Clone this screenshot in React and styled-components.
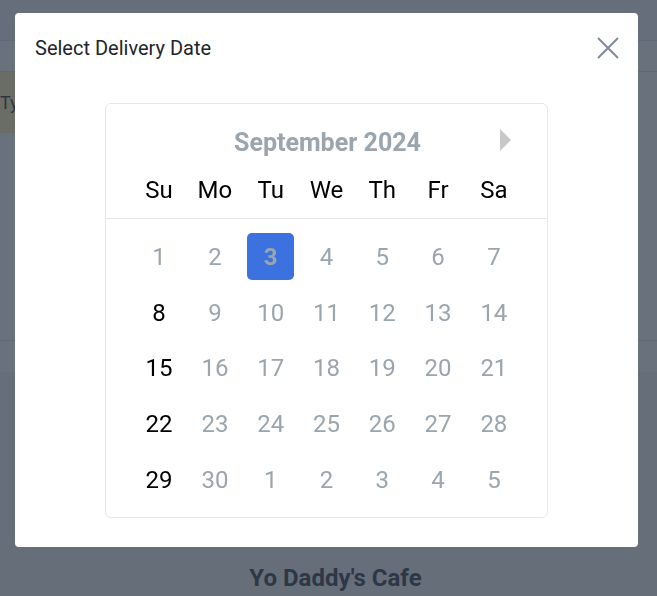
import React from "react";
import styled, { createGlobalStyle } from "styled-components";

const Global = createGlobalStyle`
  html, body { margin: 0; padding: 0; }
  body { font-family: Roboto, "Liberation Sans", Arial, sans-serif; background: #fff; overflow: hidden; }
  * { box-sizing: border-box; }
`;

const Page = styled.div`
  width: 657px;
  height: 596px;
  display: flex;
  flex-direction: column;
  background: #f1f2f4;
`;

const TopBar = styled.div`
  height: 41px;
  background: #f3f4f6;
  border-bottom: 1px solid #dde0e4;
`;

const SubBar = styled.div`
  height: 31px;
  background: #fff;
  border-bottom: 1px solid #d6d9de;
`;

const BannerRow = styled.div`
  height: 61px;
  background: #fff;
  display: flex;
`;

const Banner = styled.div`
  width: 220px;
  background: #fff0a0;
  display: flex;
  align-items: center;
  font-size: 18px;
  color: #111;
`;

const Content = styled.div`
  height: 208px;
  background: #fff;
  border-bottom: 1px solid #d6d9de;
`;

const Strip = styled.div`
  height: 31px;
  background: #fff;
`;

const Footer = styled.div`
  flex: 1;
  display: flex;
  align-items: flex-end;
  justify-content: center;
  padding: 0 0 4px 14px;
  font-family: Roboto, "Liberation Sans", sans-serif;
  font-weight: 700;
  font-size: 24px;
  color: #121820;
`;

const Overlay = styled.div`
  position: fixed;
  inset: 0;
  background: rgba(55, 65, 81, 0.75);
`;

const Modal = styled.div`
  position: fixed;
  left: 15px;
  top: 13px;
  width: 623px;
  height: 534px;
  background: #fff;
  border-radius: 4px;
  display: flex;
  flex-direction: column;
`;

const ModalHeader = styled.div`
  display: flex;
  justify-content: space-between;
  align-items: flex-start;
  padding: 22px 20px 0 20px;
  height: 68px;
`;

const Title = styled.h2`
  margin: 0;
  font-weight: 400;
  font-size: 20px;
  line-height: 26px;
  color: #212529;
`;

const CloseButton = styled.button`
  border: 0;
  background: transparent;
  padding: 0;
  width: 24px;
  height: 24px;
  margin-top: 1px;
  margin-right: -2px;
  display: flex;
  align-items: center;
  justify-content: center;
  cursor: pointer;
`;

const Body = styled.div`
  display: flex;
  justify-content: center;
  padding-top: 22px;
`;

const Calendar = styled.div`
  width: 443px;
  height: 415px;
  border: 1px solid #e5e7eb;
  border-radius: 6px;
  display: flex;
  flex-direction: column;
`;

const MonthRow = styled.div`
  position: relative;
  height: 53px;
  display: flex;
  align-items: flex-end;
  justify-content: center;
`;

const MonthLabel = styled.div`
  font-weight: 700;
  font-size: 25px;
  line-height: 29px;
  color: #9aa5ae;
  margin-left: 2px;
`;

const NextArrow = styled.span`
  position: absolute;
  right: 36px;
  top: 25px;
  width: 0;
  height: 0;
  border-top: 11px solid transparent;
  border-bottom: 11px solid transparent;
  border-left: 11px solid #c8c8c8;
`;

const Grid = styled.div`
  display: grid;
  grid-template-columns: repeat(7, 55.8px);
  justify-content: center;
`;

const WeekHeader = styled(Grid)`
  height: 62px;
  align-items: center;
  border-bottom: 1px solid #e5e7eb;
  padding-top: 4px;
`;

const WeekDay = styled.div`
  text-align: center;
  font-size: 24px;
  color: #000;
`;

const Days = styled(Grid)`
  padding-top: 10px;
  grid-auto-rows: 55.8px;
`;

const Day = styled.div`
  display: flex;
  align-items: center;
  justify-content: center;
`;

const DayNum = styled.span`
  width: 47px;
  height: 47px;
  display: flex;
  align-items: center;
  justify-content: center;
  border-radius: 5px;
  font-size: 24px;
  color: ${(p) => (p.$active ? "#000" : "#9aa5ae")};
  background: ${(p) => (p.$selected ? "#3b72e0" : "transparent")};
  font-weight: ${(p) => (p.$selected ? 700 : 400)};
`;

const weekdays = ["Su", "Mo", "Tu", "We", "Th", "Fr", "Sa"];
const days = [];
for (let i = 1; i <= 30; i++) days.push(i);
for (let i = 1; i <= 5; i++) days.push(i);

export default function App() {
  return (
    <>
      <Global />
      <Page>
        <TopBar />
        <SubBar />
        <BannerRow>
          <Banner>Type</Banner>
        </BannerRow>
        <Content />
        <Strip />
        <Footer>Yo Daddy's Cafe</Footer>
      </Page>
      <Overlay />
      <Modal>
        <ModalHeader>
          <Title>Select Delivery Date</Title>
          <CloseButton aria-label="Close">
            <svg width="22" height="22" viewBox="0 0 22 22">
              <path d="M1 1 L21 21 M21 1 L1 21" stroke="#7f8994" strokeWidth="2" />
            </svg>
          </CloseButton>
        </ModalHeader>
        <Body>
          <Calendar>
            <MonthRow>
              <MonthLabel>September 2024</MonthLabel>
              <NextArrow />
            </MonthRow>
            <WeekHeader>
              {weekdays.map((w) => (
                <WeekDay key={w}>{w}</WeekDay>
              ))}
            </WeekHeader>
            <Days>
              {days.map((d, i) => {
                const sunday = i % 7 === 0;
                const active = sunday && i > 0 && i < 30;
                return (
                  <Day key={i}>
                    <DayNum $active={active} $selected={i === 2}>
                      {d}
                    </DayNum>
                  </Day>
                );
              })}
            </Days>
          </Calendar>
        </Body>
      </Modal>
    </>
  );
}
